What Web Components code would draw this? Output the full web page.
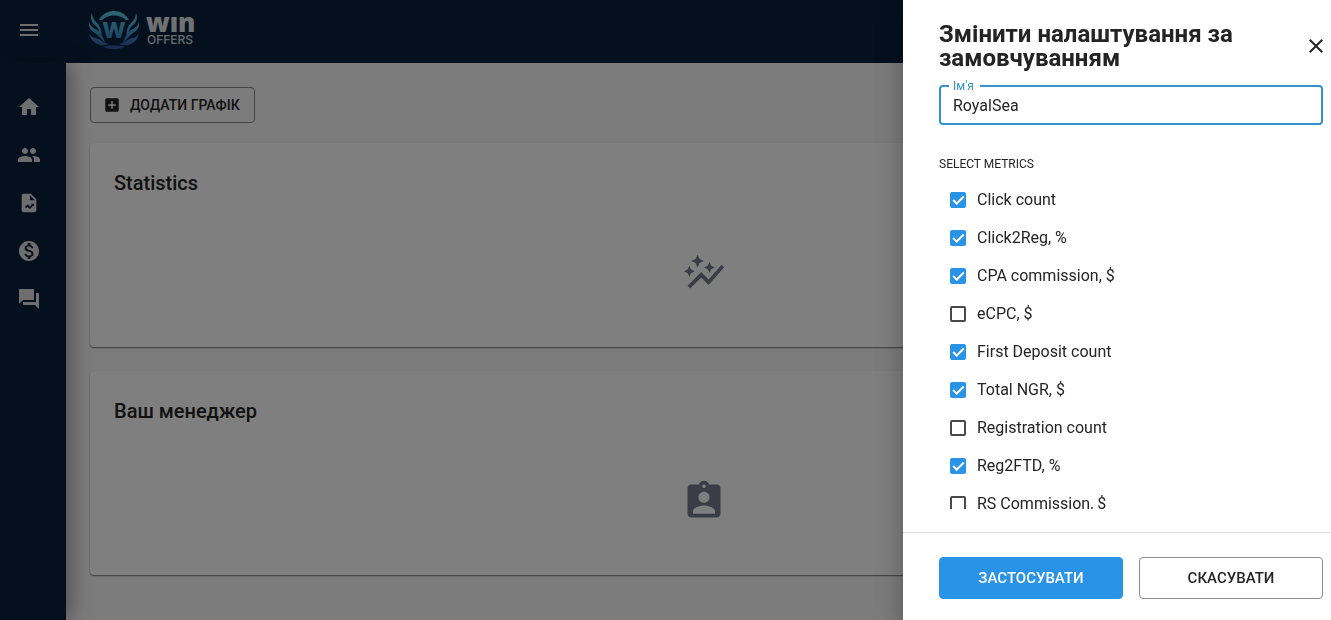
<!DOCTYPE html>
<html lang="uk">
<head>
<meta charset="utf-8">
<meta name="viewport" content="width=device-width, initial-scale=1">
<title>Win Offers</title>
<style>
html, body { margin: 0; height: 100%; }
body {
  font-family: Roboto, "Liberation Sans", sans-serif;
  font-size: 16px;
  color: #242424;
  overflow: hidden;
  --navy: #0a203e;
  --blue: #2994e7;
  --focus: #3492cc;
}
</style>
</head>
<body>
<wo-app></wo-app>
<script>
const ICONS = {
  menu: '<path d="M3 18h18v-2H3v2zm0-5h18v-2H3v2zm0-7v2h18V6H3z"/>',
  home: '<path d="M10 20v-6h4v6h5v-8h3L12 3 2 12h3v8z"/>',
  people: '<path d="M16 11c1.66 0 2.99-1.34 2.99-3S17.660 5 16 5c-1.660 0-3 1.340-3 3s1.340 3 3 3zm-8 0c1.660 0 2.990-1.340 2.990-3S9.660 5 8 5C6.340 5 5 6.340 5 8s1.340 3 3 3zm0 2c-2.330 0-7 1.170-7 3.500V19h14v-2.500c0-2.330-4.670-3.500-7-3.500zm8 0c-.290 0-.620.020-.970.050 1.160.840 1.970 1.970 1.970 3.450V19h6v-2.500c0-2.330-4.670-3.500-7-3.500z"/>',
  report: '<path fill-rule="evenodd" d="M14 2H6c-1.100 0-1.990.900-1.990 2L4 20c0 1.100.890 2 1.990 2H18c1.100 0 2-.900 2-2V8l-6-6zm-1 7V3.500L18.500 9H13zM7.600 16.300l2.900-2.900 2.500 2.500 2.100-2.100L14 12.700h3.500v3.500l-1.100-1.100-3.400 3.400-2.500-2.500-1.600 1.600z"/>',
  money: '<path d="M12 2C6.480 2 2 6.480 2 12s4.480 10 10 10 10-4.480 10-10S17.520 2 12 2zm1.410 16.090V20h-2.670v-1.930c-1.710-.360-3.160-1.460-3.270-3.400h1.960c.100 1.050.820 1.870 2.650 1.870 1.960 0 2.400-.980 2.400-1.590 0-.830-.440-1.610-2.670-2.140-2.480-.600-4.180-1.620-4.180-3.670 0-1.720 1.390-2.840 3.110-3.210V4h2.670v1.950c1.860.450 2.790 1.860 2.850 3.390H14.300c-.050-1.110-.640-1.870-2.220-1.870-1.500 0-2.400.680-2.400 1.640 0 .840.650 1.390 2.670 1.910s4.180 1.390 4.180 3.910c-.010 1.830-1.380 2.830-3.120 3.160z"/>',
  chat: '<path d="M21 6h-2v9H6v2c0 .550.450 1 1 1h11l4 4V7c0-.550-.450-1-1-1zm-4 6V3c0-.550-.450-1-1-1H3c-.550 0-1 .450-1 1v14l4-4h10c.550 0 1-.450 1-1z"/>',
  add: '<path d="M19 3H5c-1.110 0-2 .900-2 2v14c0 1.100.890 2 2 2h14c1.100 0 2-.900 2-2V5c0-1.100-.900-2-2-2zm-2 10h-4v4h-2v-4H7v-2h4V7h2v4h4v2z"/>',
  chart: '<path d="M14.060 9.940L12 9l2.060-.940L15 6l.940 2.060L18 9l-2.060.940L15 12l-.940-2.060zM4 14l.940-2.060L7 11l-2.060-.940L4 8l-.940 2.060L1 11l2.060.940L4 14zm4.500-5l1.090-2.410L12 5.500 9.590 4.410 8.500 2 7.410 4.410 5 5.500l2.410 1.090L8.500 9zm-4 11.500l6-6.010 4 4L23 8.930l-1.410-1.410-7.090 7.970-4-4L3 19l1.500 1.500z"/>',
  manager: '<path d="M19 3h-4.180C14.400 1.840 13.300 1 12 1c-1.300 0-2.400.840-2.820 2H5c-1.100 0-2 .900-2 2v14c0 1.100.900 2 2 2h14c1.100 0 2-.900 2-2V5c0-1.100-.900-2-2-2zm-7 0c.550 0 1 .450 1 1s-.450 1-1 1-1-.450-1-1 .450-1 1-1zm0 4c1.660 0 3 1.340 3 3s-1.340 3-3 3-3-1.340-3-3 1.340-3 3-3zm6 12H6v-1.400c0-2 4-3.100 6-3.100s6 1.100 6 3.100V19z"/>',
  close: '<path d="M19 6.410L17.590 5 12 10.590 6.410 5 5 6.410 10.590 12 5 17.590 6.410 19 12 13.410 17.590 19 19 17.590 13.410 12z"/>'
};

class View extends HTMLElement {
  constructor() {
    super();
    this.attachShadow({ mode: 'open' });
  }
  connectedCallback() {
    this.shadowRoot.innerHTML = '<style>' + this.css() + '</style>' + this.html();
  }
}

customElements.define('wo-icon', class extends View {
  css() {
    return `:host { display: block; width: 24px; height: 24px; flex: none; }
      svg { display: block; width: 100%; height: 100%; fill: currentColor; }`;
  }
  html() {
    return `<svg viewBox="0 0 24 24" aria-hidden="true">${ICONS[this.getAttribute('name')]}</svg>`;
  }
});

customElements.define('wo-logo', class extends View {
  css() {
    return `:host { display: block; width: 110px; height: 48px; }
      svg { display: block; width: 100%; height: 100%; }`;
  }
  html() {
    return `<svg viewBox="0 -5 110 48" role="img" aria-label="Win Offers">
      <defs><linearGradient id="g" gradientUnits="userSpaceOnUse" x1="0" y1="0" x2="0" y2="38">
        <stop offset="0" stop-color="#58cce4"/><stop offset=".5" stop-color="#46a8d6"/><stop offset="1" stop-color="#2c50a0"/>
      </linearGradient></defs>
      <g fill="url(#g)">
        <path d="M11 9C17-3 35-3 41 9L37.500 9C33 3 19 3 14.500 9Z"/>
        <g id="wing">
          <path d="M4 2C1.500 8 4 12 9 16C11 18 11 22 13 26C14.500 20 12 15 9 12C6 9 4 6 4 2Z"/>
          <path d="M1 11C0 17 4 20 8 23C11 25 13 28 17 32C16 27 13 22 9 19C5 17 2 15 1 11Z"/>
          <path d="M1 21C1 25 5 26.500 9 27.500C13 28.500 15 32 21 33C13 37 2 32 1 21Z"/>
        </g>
        <use href="#wing" transform="matrix(-1 0 0 1 52 0)"/>
        <path d="M15 35.500C21 34 31 34 37 35.500C32 39 20 39 15 35.500Z"/>
      </g>
      <text x="26" y="27" text-anchor="middle" font-family="Inter, sans-serif" font-size="22" font-weight="800" fill="url(#g)">W</text>
      <text x="58" y="21" font-family="Open Sans, sans-serif" font-size="26" font-weight="800" fill="#e0e2e6">wın</text>
      <text x="59" y="33" font-family="Inter, sans-serif" font-size="12" font-weight="500" fill="#d0d4da">OFFERS</text>
    </svg>`;
  }
});

customElements.define('wo-header', class extends View {
  css() {
    return `:host { display: flex; align-items: center; height: 63px; background: var(--navy); color: #fff; }
      button { width: 58px; height: 60px; display: flex; align-items: center; justify-content: center; padding: 0; margin: 0 30px 3px 0; border: 0; background: none; color: #dcdcdc; }
      a { margin-bottom: 3px; }`;
  }
  html() {
    return `<button aria-label="Меню"><wo-icon name="menu"></wo-icon></button><a href="#" aria-label="Win Offers"><wo-logo></wo-logo></a>`;
  }
});

customElements.define('wo-sidebar', class extends View {
  css() {
    return `:host { display: block; width: 66px; flex: none; background: var(--navy); box-shadow: 4px 0 20px rgba(0, 0, 0, .4); }
      nav { display: flex; flex-direction: column; padding-top: 20px; }
      a { display: flex; align-items: center; justify-content: center; width: 58px; height: 48px; color: #dcdcdc; }
      a.report wo-icon { width: 22px; height: 22px; }`;
  }
  html() {
    const items = [['home', 'Головна'], ['people', 'Користувачі'], ['report', 'Звіти'], ['money', 'Фінанси'], ['chat', 'Повідомлення']];
    return '<nav>' + items.map(([i, t]) => `<a class="${i}" href="#" aria-label="${t}"><wo-icon name="${i}"></wo-icon></a>`).join('') + '</nav>';
  }
});

customElements.define('wo-card', class extends View {
  css() {
    return `:host { display: flex; flex-direction: column; box-sizing: border-box; min-height: 204px; padding: 24px; background: #fff; border-radius: 4px; box-shadow: 0 1px 1px rgba(0, 0, 0, .4), 0 1px 3px rgba(0, 0, 0, .16); }
      h2 { margin: 0; font-size: 20px; line-height: 32px; font-weight: 500; }
      div { flex: 1; display: flex; justify-content: center; padding-top: 52px; color: #747a8c; }
      wo-icon { width: 44px; height: 44px; }`;
  }
  html() {
    return `<h2><slot></slot></h2><div><wo-icon name="${this.getAttribute('icon')}"></wo-icon></div>`;
  }
});

customElements.define('wo-dashboard', class extends View {
  css() {
    return `:host { display: flex; flex-direction: column; align-items: stretch; gap: 24px; flex: 1; min-width: 0; padding: 24px 13px 24px 24px; background: #f8f8f8; }
      button { align-self: flex-start; display: flex; align-items: center; gap: 9px; height: 36px; padding: 0 14px 0 12px; margin-bottom: -4px; border: 1px solid #888; border-radius: 4px; background: none; color: inherit; font: 500 14px/24px Roboto, sans-serif; }
      wo-icon { width: 18px; height: 18px; }`;
  }
  html() {
    return `<button><wo-icon name="add"></wo-icon><span>ДОДАТИ ГРАФІК</span></button>
      <wo-card icon="chart">Statistics</wo-card>
      <wo-card icon="manager">Ваш менеджер</wo-card>`;
  }
});

customElements.define('wo-text-field', class extends View {
  css() {
    return `:host { display: block; }
      fieldset { margin: 0; min-width: 0; padding: 0 12px; height: 45px; box-sizing: border-box; border: 2px solid var(--focus); border-radius: 4px; }
      legend { padding: 0 6px 0 4px; margin-left: -4px; color: var(--focus); font-size: 12px; line-height: 12px; }
      legend label { display: block; }
      input { display: block; box-sizing: border-box; width: 100%; height: 26px; padding: 0; border: 0; outline: 0; background: none; color: inherit; font: 400 16px/24px Roboto, sans-serif; }`;
  }
  html() {
    return `<fieldset><legend><label for="f">${this.getAttribute('label')}</label></legend><input id="f" type="text" value="${this.getAttribute('value')}"></fieldset>`;
  }
});

customElements.define('wo-check', class extends View {
  css() {
    return `:host { display: block; }
      label { display: flex; align-items: center; gap: 11px; height: 38px; padding-left: 11px; line-height: 24px; }
      input { appearance: none; box-sizing: border-box; width: 16px; height: 16px; margin: 0; border: 2px solid #494949; border-radius: 2px; display: grid; place-items: center; }
      input:checked { border-color: var(--blue); background: var(--blue); }
      input:checked::before { content: ""; box-sizing: border-box; width: 11px; height: 6px; margin-bottom: 3px; border: solid #fff; border-width: 0 0 2px 2px; transform: rotate(-45deg); }`;
  }
  html() {
    return `<label><input type="checkbox"${this.hasAttribute('checked') ? ' checked' : ''}><slot></slot></label>`;
  }
});

customElements.define('wo-button', class extends View {
  css() {
    return `:host { display: block; flex: 1; }
      button { width: 100%; height: 42px; padding: 0 16px; border: 1px solid #8c8c8c; border-radius: 4px; background: #fff; color: inherit; font: 500 15px/26px Roboto, sans-serif; }
      :host([primary]) button { border-color: var(--blue); background: var(--blue); color: #fff; }`;
  }
  html() { return '<button><slot></slot></button>'; }
});

customElements.define('wo-settings', class extends View {
  css() {
    return `:host { display: flex; flex-direction: column; box-sizing: border-box; width: 428px; max-width: 100%; height: 100%; background: #fff; box-shadow: 0 8px 10px -5px rgba(0,0,0,.2), 0 16px 24px 2px rgba(0,0,0,.14), 0 6px 30px 5px rgba(0,0,0,.12); }
      header { display: flex; align-items: center; justify-content: space-between; padding: 22px 3px 0 36px; }
      h1 { margin: 0; max-width: 320px; font-size: 24px; line-height: 24px; font-weight: 700; }
      header button { display: flex; padding: 0; border: 0; background: none; color: inherit; }
      wo-text-field { margin: 10px 8px 0 36px; }
      section { flex: 1; min-height: 0; overflow: hidden; margin: 33px 8px 23px 36px; }
      h2 { margin: 0; font-size: 12px; line-height: 12px; font-weight: 400; padding-bottom: 11px; }
      footer { display: flex; gap: 16px; padding: 24px 8px 21px 36px; border-top: 1px solid #e0e0e0; }`;
  }
  html() {
    const rows = [['Click count', 1], ['Click2Reg, %', 1], ['CPA commission, $', 1], ['eCPC, $', 0], ['First Deposit count', 1],
      ['Total NGR, $', 1], ['Registration count', 0], ['Reg2FTD, %', 1], ['RS Commission, $', 0]];
    return `<header><h1>Змінити налаштування за замовчуванням</h1><button aria-label="Закрити"><wo-icon name="close"></wo-icon></button></header>
      <wo-text-field label="Ім'я" value="RoyalSea"></wo-text-field>
      <section><h2>SELECT METRICS</h2>${rows.map(([t, c]) => `<wo-check${c ? ' checked' : ''}>${t}</wo-check>`).join('')}</section>
      <footer><wo-button primary>ЗАСТОСУВАТИ</wo-button><wo-button>СКАСУВАТИ</wo-button></footer>`;
  }
});

customElements.define('wo-app', class extends View {
  css() {
    return `:host { display: flex; flex-direction: column; min-height: 100vh; position: relative; }
      main { display: flex; flex: 1; }
      wo-sidebar { z-index: 1; }
      .overlay { position: fixed; inset: 0; z-index: 2; display: flex; justify-content: flex-end; background: rgba(0, 0, 0, .5); }`;
  }
  html() {
    return `<wo-header></wo-header>
      <main><wo-sidebar></wo-sidebar><wo-dashboard></wo-dashboard></main>
      <div class="overlay"><wo-settings role="dialog"></wo-settings></div>`;
  }
});
</script>
</body>
</html>
